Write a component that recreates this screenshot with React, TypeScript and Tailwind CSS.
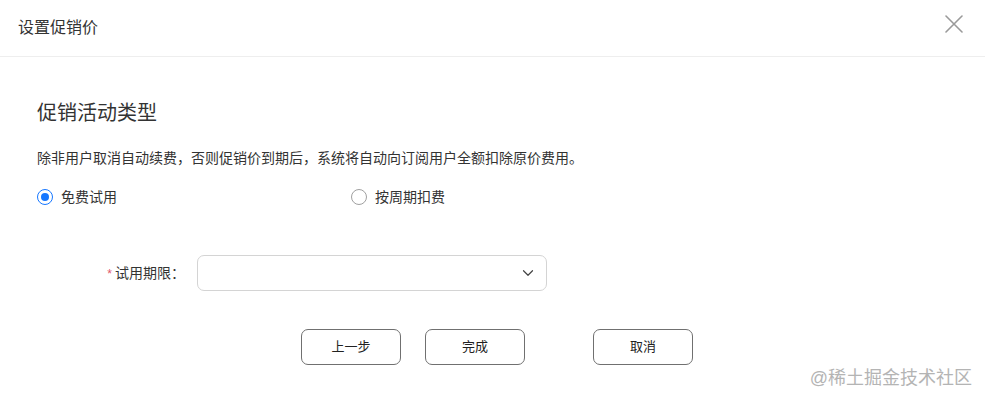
import { ChevronDown } from "lucide-react";

const font = { fontFamily: '"Liberation Sans", "Noto Sans CJK SC", sans-serif' };

function Radio({ checked, label }: { checked?: boolean; label: string }) {
  return (
    <label className="flex h-5 items-center gap-[8px] text-[14px] text-[#333]">
      <span
        className={
          checked
            ? "flex h-4 w-4 items-center justify-center rounded-full border-[1.5px] border-[#1677ff] bg-white"
            : "h-4 w-4 rounded-full border border-[#a0a0a0] bg-white"
        }
      >
        {checked && <span className="h-[8px] w-[8px] rounded-full bg-[#1677ff]" />}
      </span>
      {label}
    </label>
  );
}

function Btn({ children }: { children: string }) {
  return (
    <button className="flex h-9 w-[100px] items-center justify-center rounded-[7px] border border-[#707070] bg-white text-[13px] text-[#222]">
      {children}
    </button>
  );
}

export default function App() {
  return (
    <div className="relative h-[403px] w-[985px] overflow-hidden bg-white" style={font}>
      <header className="flex h-[57px] items-center justify-between border-b border-[#eeeeee] pl-[18px] pr-[22px]">
        <h2 className="text-[16px] text-[#333]">设置促销价</h2>
        <svg width="18" height="18" viewBox="0 0 18 18" className="mb-[8px]">
          <path d="M1 1 L17 17 M17 1 L1 17" stroke="#9a9a9a" strokeWidth="1.6" strokeLinecap="round" />
        </svg>
      </header>

      <div className="px-[37px] pt-[42px]">
        <h3 className="text-[20px] leading-7 text-[#333]">促销活动类型</h3>
        <p className="mt-[21px] text-[14px] leading-5 text-[#333]">
          除非用户取消自动续费，否则促销价到期后，系统将自动向订阅用户全额扣除原价费用。
        </p>

        <div className="mt-[19px] flex">
          <div className="w-[314px]">
            <Radio checked label="免费试用" />
          </div>
          <Radio label="按周期扣费" />
        </div>

        <div className="mt-[48px] flex items-center">
          <div className="w-[148px] text-right text-[14px] text-[#333]">
            <span className="mr-[3px] text-[12px] text-[#e0566b]">*</span>
            试用期限：
          </div>
          <div className="ml-[12px] flex h-9 w-[350px] items-center justify-end rounded-[7px] border border-[#d4d4d4] pr-[9px]">
            <ChevronDown className="h-[18px] w-[18px] text-[#444]" strokeWidth={1.6} />
          </div>
        </div>

        <div className="mt-[38px] flex pl-[264px]">
          <Btn>上一步</Btn>
          <div className="ml-[24px]">
            <Btn>完成</Btn>
          </div>
          <div className="ml-[68px]">
            <Btn>取消</Btn>
          </div>
        </div>
      </div>

      <div className="absolute bottom-[13px] right-[13px] text-[18px] leading-6 text-[#b4b4b4]">
        @稀土掘金技术社区
      </div>
    </div>
  );
}
